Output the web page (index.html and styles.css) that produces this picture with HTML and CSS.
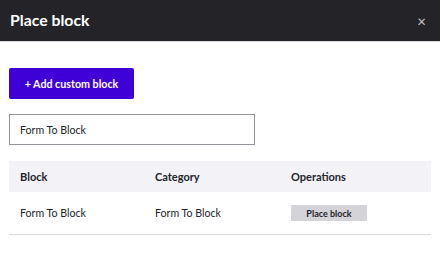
FILE: index.html
```html
<!DOCTYPE html>
<html>
<head>
<meta charset="utf-8">
<link rel="stylesheet" href="styles.css">
</head>
<body>
<div class="dialog">
  <div class="titlebar">
    <span class="title">Place block</span>
    <span class="close">×</span>
  </div>
  <div class="content">
    <button class="primary">+ Add custom block</button>
    <div class="filter">Form To Block</div>
    <table class="blocks">
      <thead>
        <tr><th class="c1">Block</th><th class="c2">Category</th><th class="c3">Operations</th></tr>
      </thead>
      <tbody>
        <tr><td>Form To Block</td><td>Form To Block</td><td><span class="place">Place block</span></td></tr>
      </tbody>
    </table>
  </div>
</div>
</body>
</html>
```
FILE: styles.css
```css
html, body { margin: 0; padding: 0; background: #fff; }
body { font-family: Lato, "Noto Sans", sans-serif; color: #232429; }
.dialog { width: 440px; height: 256px; overflow: hidden; }
.titlebar {
  height: 41px;
  background: #232328;
  border-bottom: 1px solid #d6d6da;
  display: flex;
  align-items: center;
  justify-content: space-between;
  padding: 0 14px 0 10px;
}
.title { color: #fff; font-weight: 700; font-size: 15.8px; margin-top: -2px; }
.close { color: #c8c8cc; font-size: 15px; line-height: 1; margin-top: 1px; }
.content { padding: 26px 9px 0 9px; display: flex; flex-direction: column; align-items: flex-start; }
.primary {
  width: 125px; height: 31px;
  background: #3e00d6; color: #fff;
  border: 0; border-radius: 2px;
  font-family: inherit; font-weight: 700; font-size: 10.7px;
  padding: 0; margin: 0;
}
.filter {
  margin-top: 15px;
  box-sizing: border-box;
  width: 246px; height: 31px;
  border: 1px solid #939399;
  font-size: 10.6px;
  padding-left: 10px;
  display: flex; align-items: center;
  color: #232429;
}
.blocks {
  margin-top: 16px;
  width: 422px;
  border-collapse: collapse;
  font-size: 10.6px;
}
.blocks th {
  background: #f2f2f7;
  height: 31px;
  text-align: left;
  font-weight: 700;
  font-size: 11px;
  padding: 0 0 0 11px;
}
.c1 { width: 135px; box-sizing: border-box; }
.c2 { width: 136px; box-sizing: border-box; }
.blocks td {
  height: 42px;
  padding: 0 0 0 11px;
  border-bottom: 1px solid #dadade;
}
.place {
  display: inline-flex; align-items: center; justify-content: center;
  width: 76px; height: 16px;
  background: #d3d3d8;
  border-radius: 1px;
  font-size: 9px; font-weight: 700;
  color: #232429;
}
```
